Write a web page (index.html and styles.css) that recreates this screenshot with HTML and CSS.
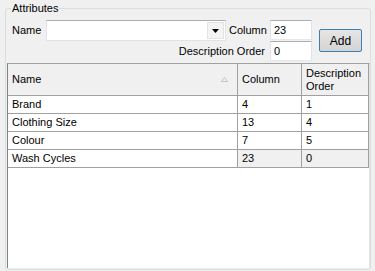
FILE: index.html
```html
<!DOCTYPE html>
<html lang="en">
<head>
    <meta charset="UTF-8">
    <meta name="viewport" content="width=device-width, initial-scale=1.0">
    <title>Attributes</title>
    <link rel="stylesheet" href="styles.css">
</head>
<body>
    <fieldset class="group">
        <legend>Attributes</legend>
        <div class="editor">
            <label class="lbl-name" for="name">Name</label>
            <div class="combo">
                <input type="text" id="name" class="combo-text">
                <span class="combo-btn">
                    <svg width="7" height="4" viewBox="0 0 7 4"><polygon points="0,0 7,0 3.5,4" fill="#000"/></svg>
                </span>
            </div>
            <label class="lbl-col" for="column">Column</label>
            <input type="text" id="column" class="text" value="23">
            <button type="button" class="add">Add</button>
            <label class="lbl-order" for="order">Description Order</label>
            <input type="text" id="order" class="text text-order" value="0">
        </div>
        <div class="grid">
            <table>
                <colgroup>
                    <col class="c-name">
                    <col class="c-col">
                    <col class="c-order">
                </colgroup>
                <thead>
                    <tr>
                        <th>
                            <div class="sorted">
                                <span>Name</span>
                                <svg width="7" height="5" viewBox="0 0 7 5"><polygon points="0.5,4.5 3.5,0.5 6.5,4.5" fill="#f4f4f4" stroke="#c2c2c2"/></svg>
                            </div>
                        </th>
                        <th>Column</th>
                        <th>Description<br>Order</th>
                    </tr>
                </thead>
                <tbody>
                    <tr><td>Brand</td><td>4</td><td>1</td></tr>
                    <tr><td>Clothing Size</td><td>13</td><td>4</td></tr>
                    <tr><td>Colour</td><td>7</td><td>5</td></tr>
                    <tr class="current"><td>Wash Cycles</td><td>23</td><td>0</td></tr>
                </tbody>
            </table>
        </div>
    </fieldset>
</body>
</html>
```

FILE: styles.css
```css
body {
    margin: 0;
    background-color: #f0f0f0;
    font-family: "Liberation Sans", Arial, sans-serif;
    font-size: 11px;
    color: #000;
}

.group {
    margin: 2px 4px 0 5px;
    padding: 0 0 1px 1px;
    border: 1px solid #d5dfe5;
    border-radius: 3px;
}

.group legend {
    margin-left: 4px;
    padding: 0 1px;
    line-height: 13px;
}

.editor {
    display: grid;
    grid-template-columns: 34px 180px 44px 42px 50px;
    grid-template-rows: 20px 20px;
    row-gap: 1px;
    align-items: center;
    margin: 5px 0 0 5px;
}

.editor label {
    line-height: 13px;
}

.combo {
    grid-column: 2;
    grid-row: 1;
    display: flex;
    height: 21px;
    box-sizing: border-box;
    align-self: start;
    border: 1px solid #e2e3ea;
    border-top-color: #abadb3;
    background: #fff;
}

.combo-text {
    flex: 1;
    min-width: 0;
    border: none;
    outline: none;
    padding: 0 3px;
    font: inherit;
}

.combo-btn {
    width: 15px;
    margin: 1px;
    display: flex;
    align-items: center;
    justify-content: center;
    border: 1px solid #e3e3e3;
    background: #f4f4f4;
}

.lbl-col {
    grid-column: 3;
    grid-row: 1;
    padding-left: 3px;
}

.text {
    grid-column: 4;
    grid-row: 1;
    width: 42px;
    height: 20px;
    box-sizing: border-box;
    border: 1px solid #e2e3ea;
    border-top-color: #abadb3;
    border-bottom-color: #e3e9ef;
    padding: 0 3px;
    font: inherit;
    outline: none;
}

.text-order {
    grid-row: 2;
}

.lbl-order {
    grid-column: 1 / 4;
    grid-row: 2;
    text-align: right;
    padding-right: 5px;
}

.add {
    grid-column: 5;
    grid-row: 1 / 3;
    justify-self: end;
    width: 43px;
    height: 23px;
    padding: 0;
    border: 1px solid #3c7fb1;
    border-radius: 2px;
    background: linear-gradient(#e6e6e6, #dcdcdc 50%, #d4d4d4);
    font: inherit;
    font-size: 12px;
    color: #000;
}

.grid {
    margin-top: 2px;
    height: 205px;
    box-sizing: border-box;
    background: #fff;
    border-left: 1px solid #828282;
    border-top: 1px solid #a0a0a0;
    border-right: 1px solid #e3e3e3;
}

.grid table {
    border-spacing: 0;
    table-layout: fixed;
    width: 361px;
}

.c-name { width: 230px; }
.c-col { width: 64px; }
.c-order { width: 67px; }

.grid th,
.grid td {
    border-right: 1px solid #a0a0a0;
    border-bottom: 1px solid #a0a0a0;
    padding: 0 4px;
    text-align: left;
    white-space: nowrap;
    overflow: hidden;
}

.grid th {
    height: 31px;
    font-weight: normal;
    line-height: 13px;
    background: #f0f0f0;
    vertical-align: middle;
}

.grid td {
    height: 17px;
    line-height: 17px;
}

.sorted {
    display: flex;
    align-items: center;
    justify-content: space-between;
    padding-right: 5px;
}

.current td + td {
    background: #f0f0f0;
}
```
